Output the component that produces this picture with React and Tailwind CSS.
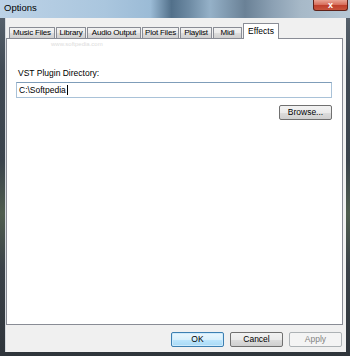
import React from 'react';

const tabs = [
  { label: 'Music Files', w: 'w-[46px]' },
  { label: 'Library', w: 'w-[30px]' },
  { label: 'Audio Output', w: 'w-[54px]' },
  { label: 'Plot Files', w: 'w-[37px]' },
  { label: 'Playlist', w: 'w-[32px]' },
  { label: 'Midi', w: 'w-[29px]' },
];

const btn =
  'h-[15px] w-[53px] rounded-[2px] border text-[8.5px] leading-none flex items-center justify-center';

const App = () => {
  return (
    <div
      className="w-[350px] h-[356px] flex flex-col overflow-hidden bg-[linear-gradient(180deg,#5c6772_0%,#414a54_20%,#3a434c_45%,#4f5d4e_60%,#3b4249_75%,#2f353b_100%)]"
      style={{ fontFamily: '"Liberation Sans", Arial, sans-serif' }}
    >
      {/* Title bar */}
      <div className="h-[18px] flex justify-between items-start bg-[linear-gradient(90deg,#bcd2e6_0%,#aac6de_30%,#9bbbd6_43%,#52708a_49%,#6d8aa3_54%,#95b1c8_60%,#6a8196_70%,#8ca1b4_78%,#a7b9c8_86%,#b6c7d5_100%)]">
        <span className="pl-[4px] pt-[2px] text-[9.5px] leading-[12px] text-black">Options</span>
        <div className="mr-[2px] w-[35px] h-[11px] rounded-b-[3px] border border-t-0 border-[#5e2118] bg-[linear-gradient(180deg,#e9a494_0%,#d8715e_45%,#c0402c_55%,#c8553d_100%)] flex items-center justify-center">
          <span className="text-white text-[9px] font-bold leading-none">x</span>
        </div>
      </div>

      {/* Client area */}
      <div className="relative flex-1 ml-[5px] mr-[4px] mb-[4px] bg-[#f0f0f0] border-l border-[#d6dadf] flex flex-col">
        {/* Tabs */}
        <div className="h-[20px] flex items-end pl-[3px] gap-[1px] relative z-10">
          {tabs.map((t) => (
            <div
              key={t.label}
              className={`${t.w} h-[11px] border border-b-0 border-[#898c95] rounded-t-[1px] bg-[linear-gradient(180deg,#f2f2f2_0%,#ebebeb_50%,#dddddd_51%,#cfcfcf_100%)] flex items-center justify-center text-[8px] leading-none text-black tracking-[-0.2px] whitespace-nowrap`}
            >
              {t.label}
            </div>
          ))}
          <div className="w-[36px] h-[16px] -mb-px border border-b-0 border-[#898c95] rounded-t-[1px] bg-white flex items-start justify-center pt-[3px] text-[8.5px] leading-none text-black">
            Effects
          </div>
        </div>

        {/* Panel */}
        <div className="relative mr-[3px] h-[287px] bg-white border border-[#898c95] flex flex-col">
          <div className="absolute left-[44px] top-[2px] text-[6px] leading-none text-[#dcdcdc] pointer-events-none">
            www.softpedia.com
          </div>
          <div className="pl-[11px] pt-[29px] text-[8.5px] leading-[10px] text-black">
            VST Plugin Directory:
          </div>
          <div className="ml-[9px] mr-[10px] mt-[4px] h-[16px] border border-[#a9c2d8] border-t-[#7f9db9] bg-white flex items-center pl-[2px] text-[8.5px] text-black">
            <span>C:\Softpedia</span>
            <span className="ml-[1px] w-px h-[10px] bg-black"></span>
          </div>
          <div className="flex justify-end mr-[10px] mt-[7px]">
            <div
              className={`${btn} border-[#707070] text-black bg-[linear-gradient(180deg,#f2f2f2_0%,#ebebeb_50%,#dddddd_51%,#cfcfcf_100%)]`}
            >
              Browse...
            </div>
          </div>
        </div>

        {/* Bottom buttons */}
        <div className="flex justify-end gap-[6px] pr-[4px] mt-[7px]">
          <div
            className={`${btn} border-[#3c7fb1] text-black bg-[linear-gradient(180deg,#eaf6fd_0%,#d9f0fc_50%,#bee6fd_51%,#a7d9f5_100%)] shadow-[inset_0_0_0_1px_#cdeafc]`}
          >
            OK
          </div>
          <div
            className={`${btn} border-[#707070] text-black bg-[linear-gradient(180deg,#f2f2f2_0%,#ebebeb_50%,#dddddd_51%,#cfcfcf_100%)]`}
          >
            Cancel
          </div>
          <div className={`${btn} border-[#adb2b5] text-[#838383] bg-[#f4f4f4]`}>Apply</div>
        </div>
      </div>
    </div>
  );
};

export default App;
